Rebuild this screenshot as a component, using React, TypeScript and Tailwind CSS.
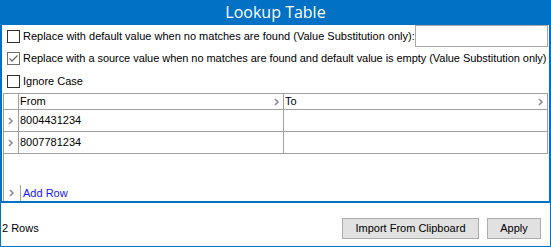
import React from "react";

const Chevron = ({ className = "" }: { className?: string }) => (
  <svg width="6" height="8" viewBox="0 0 6 8" className={className}>
    <polyline points="1,1 4,4 1,7" fill="none" stroke="#8c8c8c" strokeWidth="1.6" />
  </svg>
);

const Checkbox = ({ checked = false }: { checked?: boolean }) => (
  <div className={`w-[13px] h-[13px] border bg-white flex items-center justify-center shrink-0 ${checked ? "border-[#6e6e6e]" : "border-[#333333]"}`}>
    {checked && (
      <svg width="11" height="11" viewBox="0 0 11 11">
        <polyline points="1.5,5.5 4,8 9.5,2.5" fill="none" stroke="#6a6a6a" strokeWidth="1.3" />
      </svg>
    )}
  </div>
);

export default function App() {
  const font = { fontFamily: '"Liberation Sans", Arial, sans-serif' };
  return (
    <div className="w-[551px] h-[247px] flex flex-col bg-white text-[11px] text-black whitespace-nowrap" style={font}>
      <div className="h-[203px] flex flex-col border-x-2 border-b-2 border-[#0071c5]">
        <div className="h-[25px] bg-[#0071c5] flex items-center justify-center text-white text-[16px] leading-none -mx-[2px] pb-px" style={{ fontFamily: '"Open Sans", "Noto Sans", sans-serif' }}>
          Lookup Table
        </div>
        <div className="h-[22px] flex items-center pl-[5px]">
          <Checkbox />
          <span className="ml-[3px]">Replace with default value when no matches are found (Value Substitution only):</span>
          <div className="ml-auto mr-px self-stretch w-[133px] border border-[#a8a8a8] bg-white" />
        </div>
        <div className="h-[23px] flex items-center pl-[5px]">
          <Checkbox checked />
          <span className="ml-[3px] tracking-[-0.05px]">Replace with a source value when no matches are found and default value is empty (Value Substitution only)</span>
        </div>
        <div className="h-[23px] flex items-center pl-[5px]">
          <Checkbox />
          <span className="ml-[3px]">Ignore Case</span>
        </div>
        <div className="flex-1 ml-px border-l border-[#a0a0a0] flex flex-col">
          <div className="w-[544px] border-t border-[#a0a0a0]">
            <div className="h-[16px] flex border-b border-[#a0a0a0]">
              <div className="w-[15px] border-r border-[#a0a0a0]" />
              <div className="w-[265px] border-r border-[#a0a0a0] flex items-center justify-between pr-[3px] pl-px">
                <span>From</span>
                <Chevron />
              </div>
              <div className="flex-1 border-r border-[#a0a0a0] flex items-center justify-between pr-[3px] pl-px">
                <span>To</span>
                <Chevron />
              </div>
            </div>
            {["8004431234", "8007781234"].map((v) => (
              <div key={v} className="h-[22px] flex border-b border-[#a0a0a0]">
                <div className="w-[15px] border-r border-[#a0a0a0] flex items-center justify-center">
                  <Chevron />
                </div>
                <div className="w-[265px] border-r border-[#a0a0a0] flex items-center pl-px">{v}</div>
                <div className="flex-1 border-r border-[#a0a0a0]" />
              </div>
            ))}
          </div>
          <div className="mt-auto h-[16px] flex items-center">
            <div className="w-[17px] h-full border-r border-[#a0a0a0] flex items-center justify-center">
              <Chevron />
            </div>
            <span className="ml-[2px] text-[#1515ff]">Add Row</span>
          </div>
        </div>
      </div>
      <div className="flex-1 border-x border-b border-[#0071c5] flex items-center pl-px pr-[9px] pt-[8px]">
        <span>2 Rows</span>
        <button className="ml-auto w-[137px] h-[21px] bg-[#e1e1e1] border border-[#adadad] flex items-center justify-center">
          Import From Clipboard
        </button>
        <button className="ml-[8px] w-[54px] h-[21px] bg-[#e1e1e1] border border-[#adadad] flex items-center justify-center">
          Apply
        </button>
      </div>
    </div>
  );
}
